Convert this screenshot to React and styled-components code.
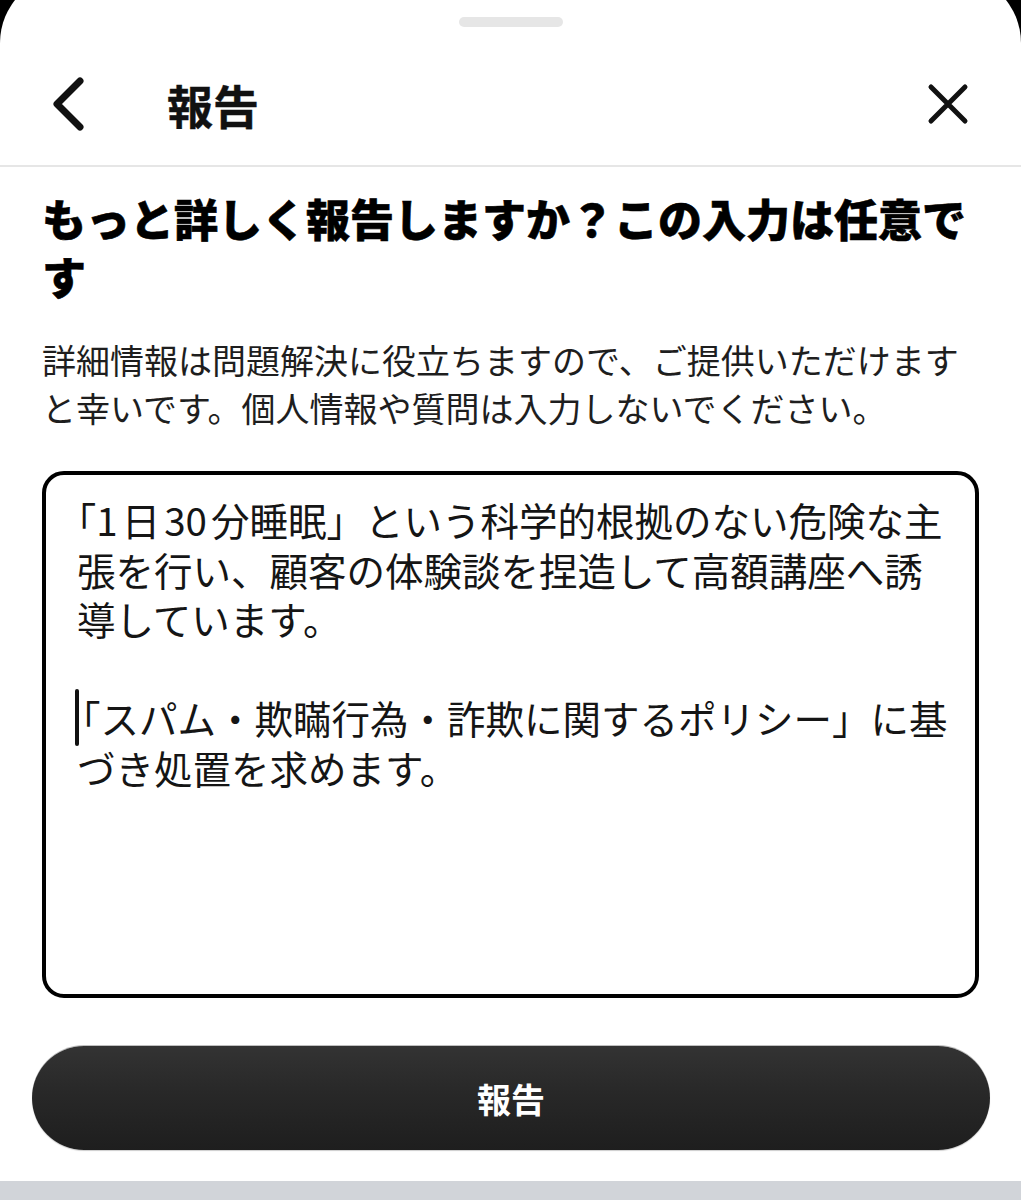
import React from "react";
import styled, { createGlobalStyle } from "styled-components";

const Global = createGlobalStyle`
  html, body { margin: 0; padding: 0; background: #000; }
  body { font-family: "Noto Sans CJK JP", "Noto Sans", sans-serif; overflow: hidden; }
  * { box-sizing: border-box; }
`;

const Sheet = styled.div`
  margin-top: -26px;
  background: #fff;
  border-radius: 69px 69px 0 0;
  display: flex;
  flex-direction: column;
  overflow: hidden;
`;

const HandleBar = styled.div`
  display: flex;
  justify-content: center;
  padding: 43px 0 16px;
`;

const Handle = styled.div`
  width: 104px;
  height: 10px;
  border-radius: 5px;
  background: #e6e6e6;
`;

const Header = styled.header`
  height: 124px;
  display: flex;
  align-items: center;
  padding: 0 51px;
  border-bottom: 2px solid #e6e6e6;
`;

const IconButton = styled.button`
  border: 0;
  background: none;
  padding: 0;
  display: flex;
  align-items: center;
  justify-content: center;
  color: #111;
  cursor: pointer;
`;

const Title = styled.h1`
  margin: 0 0 0 76px;
  flex: 1;
  font-size: 46px;
  font-weight: 700;
  color: #111;
  line-height: 1;
  -webkit-text-stroke: 0.4px #111;
`;

const Body = styled.main`
  padding: 0 42px;
  display: flex;
  flex-direction: column;
`;

const Heading = styled.h2`
  margin: 22px 0 0;
  font-size: 44px;
  line-height: 58px;
  font-weight: 900;
  color: #000;
  -webkit-text-stroke: 0.6px #000;
`;

const Note = styled.p`
  margin: 31px 0 0;
  font-size: 34px;
  line-height: 48px;
  font-weight: 400;
  color: #1e1e1e;
`;

const DetailsBox = styled.div`
  margin-top: 39px;
  height: 527px;
  border: 4px solid #000;
  border-radius: 22px;
  padding: 20px 25px 20px 31px;
  font-size: 38.5px;
  line-height: 49.5px;
  color: #151515;
  white-space: pre-wrap;
  text-spacing-trim: trim-start;
`;

const Latin = styled.span`
  margin-left: ${(p) => (p.$lead ? "0" : "4px")};
  margin-right: 4px;
`;

const Caret = styled.span`
  position: relative;
  display: inline-block;
  width: 0;
  height: 49.5px;
  vertical-align: top;
  margin-right: -15px;
  &::before {
    content: "";
    position: absolute;
    left: -2px;
    top: -4px;
    width: 3.5px;
    height: 57px;
    border-radius: 2px;
    background: #111;
  }
`;

const SubmitButton = styled.button`
  margin: 48px 31px 31px 32px;
  height: 104px;
  border: 0;
  border-radius: 52px;
  background: linear-gradient(180deg, #333 0%, #282828 45%, #1e1e1e 100%);
  box-shadow: 0 -1px 0 rgba(0, 0, 0, 0.25), 0 1px 1px rgba(0, 0, 0, 0.2);
  color: #fff;
  font-family: "Noto Sans CJK JP", sans-serif;
  font-size: 34px;
  font-weight: 700;
  cursor: pointer;
`;

const BottomStrip = styled.div`
  height: 20px;
  background: #d1d4d9;
`;

const BackIcon = () => (
  <svg width="40" height="56" viewBox="0 0 40 56" fill="none">
    <polyline
      points="29,5 6,28 29,51"
      stroke="currentColor"
      strokeWidth="7"
      strokeLinecap="round"
      strokeLinejoin="round"
    />
  </svg>
);

const CloseIcon = () => (
  <svg width="44" height="44" viewBox="0 0 44 44" fill="none">
    <path
      d="M5 5 L39 39 M39 5 L5 39"
      stroke="currentColor"
      strokeWidth="5"
      strokeLinecap="round"
    />
  </svg>
);

export default function App() {
  return (
    <>
      <Global />
      <Sheet>
        <HandleBar>
          <Handle />
        </HandleBar>
        <Header>
          <IconButton aria-label="戻る">
            <BackIcon />
          </IconButton>
          <Title>報告</Title>
          <IconButton aria-label="閉じる">
            <CloseIcon />
          </IconButton>
        </Header>
        <Body>
          <Heading>もっと詳しく報告しますか？この入力は任意です</Heading>
          <Note>
            詳細情報は問題解決に役立ちますので、ご提供いただけますと幸いです。個人情報や質問は入力しないでください。
          </Note>
          <DetailsBox role="textbox" aria-multiline="true">
            {"「"}
            <Latin $lead>1</Latin>
            {"日"}
            <Latin>30</Latin>
            {"分睡眠」という科学的根拠のない危険な主張を行い、顧客の体験談を捏造して高額講座へ誘導しています。\n\n"}
            <Caret />
            {"「スパム・欺瞞行為・詐欺に関するポリシー」に基づき処置を求めます。"}
          </DetailsBox>
        </Body>
        <SubmitButton>報告</SubmitButton>
        <BottomStrip />
      </Sheet>
    </>
  );
}
